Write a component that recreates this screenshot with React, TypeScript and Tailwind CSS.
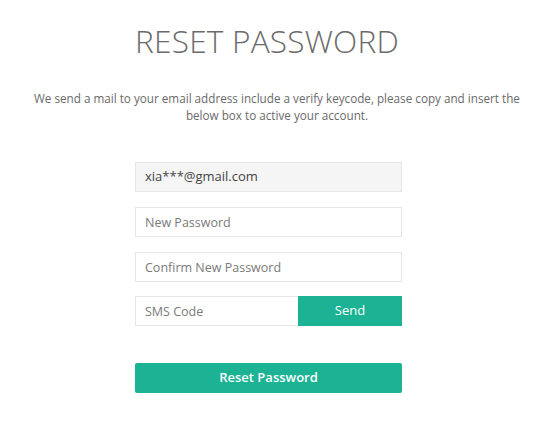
export default function App() {
    return (
        <div className="w-[554px] h-[437px] bg-white font-['Open_Sans',sans-serif] overflow-hidden">
            {/* Title */}
            <div className="pt-[22px] pl-[132px] w-[402px]">
                <h1 className="text-center text-[31.6px] leading-[38px] font-light tracking-[0.2px] text-[#6b6b6b]">
                    RESET PASSWORD
                </h1>
            </div>

            {/* Description */}
            <p className="mt-[30px] px-[26px] text-center text-[11.7px] leading-[17px] text-[#6a6a6a]">
                We send a mail to your email address include a verify keycode, please copy and insert the below box to active your account.
            </p>

            {/* Form */}
            <div className="ml-[135px] mt-[38px] w-[267px] flex flex-col gap-[15px]">
                <div className="h-[30px] flex items-center px-[9px] bg-[#f5f5f5] border border-[#e6e6e6] text-[13px] text-[#444]">
                    xia***@gmail.com
                </div>
                <input
                    placeholder="New Password"
                    className="h-[30px] px-[9px] border border-[#e6e6e6] text-[12.5px] text-[#444] placeholder:text-[#7a7a7a] outline-none"
                />
                <input
                    placeholder="Confirm New Password"
                    className="h-[30px] px-[9px] border border-[#e6e6e6] text-[12.5px] text-[#444] placeholder:text-[#7a7a7a] outline-none"
                />
                <div className="h-[30px] flex -mt-px">
                    <input
                        placeholder="SMS Code"
                        className="flex-1 min-w-0 h-full px-[9px] border border-r-0 border-[#e6e6e6] text-[12.5px] text-[#444] placeholder:text-[#7a7a7a] outline-none"
                    />
                    <button className="w-[104px] h-full bg-[#1bb394] text-white text-[13px]">
                        Send
                    </button>
                </div>
                <button className="mt-[22px] h-[30px] rounded-[2px] bg-[#1bb394] text-white text-[13px] font-semibold">
                    Reset Password
                </button>
            </div>
        </div>
    )
}
